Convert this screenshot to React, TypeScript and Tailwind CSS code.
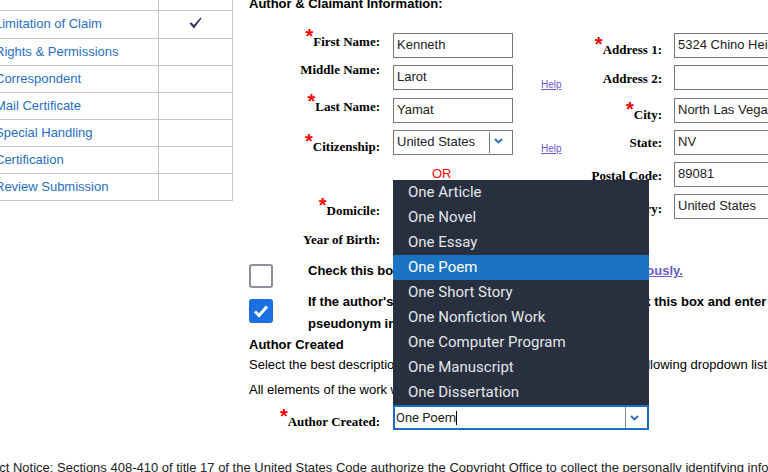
import React from "react";

const sans = "font-['Liberation_Sans',Arial,sans-serif]";
const serif = "font-['Liberation_Serif','Times_New_Roman',serif]";
const roboto = "font-['Roboto','Noto_Sans',sans-serif]";

const steps = [
  { label: "Limitation of Claim", done: true, h: "h-[28px]" },
  { label: "Rights & Permissions", done: false, h: "h-[27px]" },
  { label: "Correspondent", done: false, h: "h-[27px]" },
  { label: "Mail Certificate", done: false, h: "h-[27px]" },
  { label: "Special Handling", done: false, h: "h-[27px]" },
  { label: "Certification", done: false, h: "h-[27px]" },
  { label: "Review Submission", done: false, h: "h-[27px]" },
];

const options = [
  "One Article",
  "One Novel",
  "One Essay",
  "One Poem",
  "One Short Story",
  "One Nonfiction Work",
  "One Computer Program",
  "One Manuscript",
  "One Dissertation",
];

const inputCls = `h-[25px] shrink-0 border border-[#767676] pl-[3px] pt-[3px] text-[13px] leading-[15px] text-[#222] whitespace-nowrap overflow-hidden ${sans}`;

const Chevron = () => (
  <svg width="9" height="6" viewBox="0 0 9 6">
    <path d="M1 1 L4.5 4.5 L8 1" fill="none" stroke="#2c6cb4" strokeWidth="1.8" />
  </svg>
);

const Label = ({ text, req, cls }: { text: string; req?: boolean; cls: string }) => (
  <div className={`flex shrink-0 justify-end items-start ${cls}`}>
    {req && <span className={`text-[20px] leading-[20px] -mt-[8px] font-bold text-[#ff0000] ${sans}`}>*</span>}
    <span className={`font-bold text-[13px] leading-[15px] text-black whitespace-nowrap ${serif}`}>{text}</span>
  </div>
);

const Help = ({ cls }: { cls: string }) => (
  <div className={`w-[68px] shrink-0 pl-[28px] text-[10px] leading-[12px] ${sans} ${cls}`}>
    <span className="underline text-[#6a5acd]">Help</span>
  </div>
);

const Sidebar = () => (
  <div className={`ml-[-9px] w-[242px] shrink-0 ${sans}`}>
    <div className="flex h-[11px] border-b border-[#c6c6c6]">
      <div className="w-[168px] border-r border-[#c6c6c6]" />
      <div className="flex-1 border-r border-[#c6c6c6]" />
    </div>
    {steps.map((s) => (
      <div key={s.label} className={`flex ${s.h} border-b border-[#c6c6c6]`}>
        <div className="w-[168px] border-r border-[#c6c6c6] pl-[4px] text-[13px] leading-[26px] text-[#1f6fc6] whitespace-nowrap">
          {s.label}
        </div>
        <div className="flex-1 border-r border-[#c6c6c6] flex justify-center pt-[6px]">
          {s.done && (
            <svg width="13" height="12" viewBox="0 0 13 12">
              <path d="M0.5 6.6 L2.3 5.2 L4.8 8 L11.6 0.4 L12.6 1.3 L5 11.6 Z" fill="#35346e" />
            </svg>
          )}
        </div>
      </div>
    ))}
  </div>
);

const AuthorForm = () => (
  <div className="mt-[22px]">
    <div className="flex items-start h-[32px]">
      <Label text="First Name:" req cls="w-[144px] pr-[13px] pt-[1px]" />
      <div className={`${inputCls} w-[120px]`}>Kenneth</div>
      <div className="w-[68px] shrink-0" />
      <Label text="Address 1:" req cls="w-[93px] pr-[12px] pt-[9px]" />
      <div className={`${inputCls} w-[150px]`}>5324 Chino Heights Ln</div>
    </div>
    <div className="flex items-start h-[33px]">
      <Label text="Middle Name:" cls="w-[144px] pr-[13px] -mt-[3px]" />
      <div className={`${inputCls} w-[120px]`}>Larot</div>
      <Help cls="pt-[14px]" />
      <Label text="Address 2:" cls="w-[93px] pr-[12px] pt-[6px]" />
      <div className={`${inputCls} w-[150px]`} />
    </div>
    <div className="flex items-start h-[32px]">
      <Label text="Last Name:" req cls="w-[144px] pr-[13px] pt-[1px]" />
      <div className={`${inputCls} w-[120px]`}>Yamat</div>
      <div className="w-[68px] shrink-0" />
      <Label text="City:" req cls="w-[93px] pr-[12px] pt-[9px]" />
      <div className={`${inputCls} w-[150px]`}>North Las Vegas</div>
    </div>
    <div className="flex items-start h-[32px]">
      <Label text="Citizenship:" req cls="w-[144px] pr-[13px] pt-[9px]" />
      <div className={`h-[25px] w-[120px] shrink-0 flex border border-[#767676] text-[13px] leading-[15px] text-[#222] ${sans}`}>
        <div className="w-[95px] pl-[3px] pt-[3px] whitespace-nowrap">United States</div>
        <div className="w-px bg-[#767676] my-[1px]" />
        <div className="w-[22px] pl-[4px] pt-[7px]">
          <Chevron />
        </div>
      </div>
      <Help cls="pt-[13px]" />
      <Label text="State:" cls="w-[93px] pr-[12px] pt-[5px]" />
      <div className={`${inputCls} w-[150px]`}>NV</div>
    </div>
    <div className="flex items-start h-[32px]">
      <div className="w-[144px] shrink-0" />
      <div className={`w-[120px] shrink-0 pl-[39px] pt-[4px] text-[13px] leading-[15px] text-[#ff0000] ${sans}`}>OR</div>
      <div className="w-[68px] shrink-0" />
      <Label text="Postal Code:" cls="w-[93px] pr-[12px] pt-[6px]" />
      <div className={`${inputCls} w-[150px]`}>89081</div>
    </div>
    <div className="flex items-start h-[32px]">
      <Label text="Domicile:" req cls="w-[144px] pr-[13px] pt-[9px]" />
      <div className={`${inputCls} w-[120px]`}>United States</div>
      <div className="w-[68px] shrink-0" />
      <Label text="Country:" cls="w-[93px] pr-[12px] pt-[7px]" />
      <div className={`${inputCls} w-[150px]`}>United States</div>
    </div>
    <div className="flex items-start h-[34px]">
      <Label text="Year of Birth:" cls="w-[144px] pr-[13px] pt-[6px]" />
      <div className={`${inputCls} w-[60px]`} />
    </div>
  </div>
);

const Checks = () => (
  <div className={`text-[13px] leading-[22px] font-bold text-black ${sans}`}>
    <div className="flex items-start">
      <div className="w-[24px] h-[24px] mt-[4px] shrink-0 rounded-[3px] border-2 border-[#8f8f9d] bg-white" />
      <div className="ml-[35px] whitespace-nowrap">
        Check this box if this author&apos;s work was made <span className="underline text-[#6a5acd]">anonymously.</span>
      </div>
    </div>
    <div className="flex items-start mt-[3px]">
      <div className="w-[24px] h-[24px] mt-[8px] shrink-0 rounded-[3px] bg-[#1a6fe3] flex items-center justify-center">
        <svg width="16" height="14" viewBox="0 0 16 14">
          <path d="M2 7.5 L6 11.5 L14 2.5" fill="none" stroke="#fff" strokeWidth="3" />
        </svg>
      </div>
      <div className="ml-[35px] whitespace-nowrap">
        <div>If the author&apos;s work is made under a pseudonym, check this box and enter the</div>
        <div>pseudonym in the field provided below.</div>
      </div>
    </div>
  </div>
);

const AuthorCreated = () => (
  <div className={`text-[13px] leading-[15px] text-black ${sans}`}>
    <div className="mt-[2px] font-bold">Author Created</div>
    <div className="mt-[5px] whitespace-nowrap">
      Select the best description of the work created by this author in the following dropdown list.
    </div>
    <div className="mt-[10px] whitespace-nowrap">All elements of the work were created by this author.</div>
    <div className="mt-[8px] flex items-start">
      <Label text="Author Created:" req cls="w-[144px] pr-[13px] pt-[9px]" />
      <div className="relative w-[256px] shrink-0">
        <div className="absolute left-0 bottom-full w-[256px] z-10 bg-[#282f3e]">
          {options.map((o) => (
            <div
              key={o}
              className={`h-[25px] pl-[15px] text-[15px] leading-[25px] whitespace-nowrap ${roboto} ${
                o === "One Poem" ? "bg-[#1a74c1] text-white" : "text-[#e4e6ea]"
              }`}
            >
              {o}
            </div>
          ))}
        </div>
        <div className="h-[25px] flex border-2 border-[#1b6ec2] bg-white">
          <div className={`w-[230px] pl-[1px] pt-[3px] text-[13px] leading-[15px] text-[#222] flex items-start ${roboto}`}>
            One Poem<span className="inline-block w-px h-[14px] bg-black mt-[1px]" />
          </div>
          <div className="w-px bg-[#8a8a8a]" />
          <div className="w-[21px] pl-[4px] pt-[8px]">
            <Chevron />
          </div>
        </div>
      </div>
    </div>
  </div>
);

export default function App() {
  return (
    <div className="w-[768px] h-[472px] overflow-hidden bg-white">
      <div className="flex">
        <Sidebar />
        <div className="flex-1 min-w-0 pl-[16px] -mt-[4px]">
          <div className={`text-[13px] leading-[15px] font-bold text-black whitespace-nowrap ${sans}`}>
            Author &amp; Claimant Information:
          </div>
          <AuthorForm />
          <Checks />
          <AuthorCreated />
        </div>
      </div>
      <div className={`mt-[30px] ml-[-55px] whitespace-nowrap text-[13px] leading-[15px] text-[#222] ${sans}`}>
        Privacy Act Notice: Sections 408-410 of title 17 of the United States Code authorize the Copyright Office to
        collect the personally identifying information requested on this form in order to process the application.
      </div>
    </div>
  );
}
